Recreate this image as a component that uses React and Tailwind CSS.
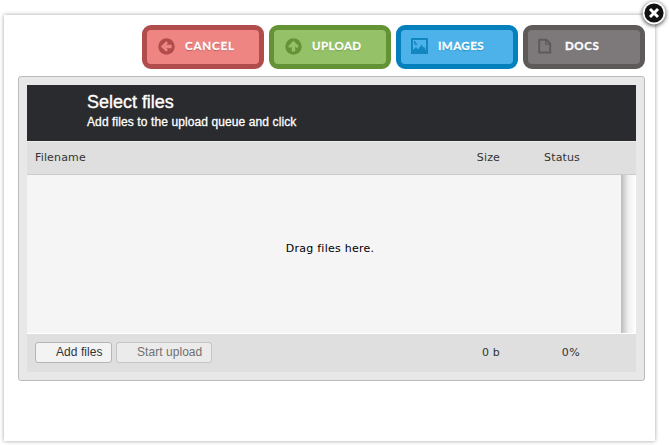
import React from 'react';

function ArrowIcon({ up, fill, arrow }) {
  return (
    <svg width="17" height="17" viewBox="0 0 17 17">
      <circle cx="8.5" cy="8.5" r="8.2" fill={fill} />
      <path
        d="M2.8 8.5L8.2 3.2L10 5L8.5 6.8H13.6V10.2H8.5L10 12L8.2 13.8Z"
        fill={arrow}
        transform={up ? 'rotate(90 8.5 8.5)' : undefined}
      />
    </svg>
  );
}

function ImageIcon() {
  return (
    <svg width="17" height="16" viewBox="0 0 17 16" className="-ml-px">
      <path fillRule="evenodd" d="M0 0H17V16H0ZM2 2V14H15V2Z" fill="#1286be" />
      <path d="M2 12L5 9L7 11.4L10.6 6.6L12 9.4L13 8.6L15 12.5V14H2Z" fill="#1286be" />
      <path d="M3 3H4.6L4.2 4.6L6.8 6.2L4.8 7.2L3 5.4Z" fill="#1286be" />
    </svg>
  );
}

function DocIcon() {
  return (
    <svg width="17" height="16" viewBox="0 0 17 16" className="-ml-px">
      <path d="M1.2 1.7H8.4L12.2 5.6V14.5H1.2Z" fill="none" stroke="#5f5a5a" strokeWidth="2" />
      <path d="M7.8 2V6.2H12" fill="none" stroke="#5f5a5a" strokeWidth="1.3" />
    </svg>
  );
}

function ActionButton({ label, icon, colors, text }) {
  return (
    <button className={`flex h-11 w-[122px] items-center rounded-[9px] border-[5px] pb-0.5 pl-[11px] ${colors}`}>
      <span className="w-[27px] shrink-0">{icon}</span>
      <span className={`whitespace-nowrap font-[Lato,'Open_Sans',sans-serif] text-[11.5px] leading-none font-bold text-white [-webkit-text-stroke:0.3px_white] ${text}`}>
        {label}
      </span>
    </button>
  );
}

export default function App() {
  return (
    <div className="relative h-[445px] w-[669px] overflow-hidden bg-white pt-[15px] pl-1 font-['DejaVu_Sans',sans-serif] text-[11px] text-[#333]">
      <div className="h-[426px] w-[651px] bg-white px-3.5 pt-2.5 shadow-[0_0_4px_rgba(0,0,0,0.38)]">
        <div className="-mr-1 flex justify-end gap-[5px]">
          <ActionButton label="CANCEL" colors="border-[#b04c4b] bg-[#ee8582]" text="tracking-[0.85px] [text-shadow:0_1px_1px_#b04c4b]" icon={<ArrowIcon fill="#b04c4b" arrow="#ee8582" />} />
          <ActionButton label="UPLOAD" colors="border-[#649335] bg-[#95c168]" text="tracking-[0.4px] [text-shadow:0_1px_1px_#649335]" icon={<ArrowIcon up fill="#649335" arrow="#95c168" />} />
          <ActionButton label="IMAGES" colors="border-[#0481bd] bg-[#4db2e9]" text="-ml-px tracking-[0.45px] [text-shadow:0_1px_1px_#0481bd]" icon={<ImageIcon />} />
          <ActionButton label="DOCS" colors="border-[#5f5a5a] bg-[#7d797a]" text="-ml-px tracking-[0.6px]" icon={<DocIcon />} />
        </div>

        <div className="mt-[7px] h-[305px] w-[627px] rounded-[3px] border border-[#bbb] bg-[#e8e8e8] p-2">
          <div className="h-14 bg-[#2a2b2e] pt-2 pl-[60px] font-['Liberation_Sans',sans-serif] text-white">
            <div className="text-[18px] leading-[19px] tracking-[-0.02px] [-webkit-text-stroke:0.35px_white]">Select files</div>
            <div className="mt-[3px] text-[12px] leading-[14px] tracking-[0.1px] [-webkit-text-stroke:0.3px_white]">Add files to the upload queue and click</div>
          </div>
          <div className="flex h-[34px] items-center border-t border-b border-t-[#eee] border-b-[#ccc] bg-[#dfdfdf] pr-14 pl-2 tracking-[0.15px]">
            <span className="flex-1">Filename</span>
            <span className="w-20 text-right">Size</span>
            <span className="w-20 text-right">Status</span>
          </div>
          <div className="flex h-[158px] bg-[#f5f5f5]">
            <div className="flex flex-1 items-center justify-center pb-2.5 pl-3 tracking-[0.25px] text-black">Drag files here.</div>
            <div className="w-[15px] bg-linear-to-r from-[#bcbcbc] via-[#f0f0f0] via-50% to-white" />
          </div>
          <div className="flex h-[39px] items-center border-t border-white bg-[#dfdfdf] pr-14 pl-2 tracking-[0.15px]">
            <div className="flex flex-1 gap-1 pb-0.5 font-['Liberation_Sans',sans-serif] text-[12px]">
              <button className="h-[21px] w-[77px] rounded-[3px] border border-[#b5b5b5] bg-[#f3f3f3] pl-5 text-left leading-[18px] tracking-[0.05px] whitespace-nowrap">Add files</button>
              <button className="h-[21px] w-24 rounded-[3px] border border-[#c5c5c5] bg-[#ebebeb] pl-5 text-left leading-[18px] tracking-[0.05px] whitespace-nowrap text-[#707070]">Start upload</button>
            </div>
            <span className="w-20 text-right">0 b</span>
            <span className="w-20 text-right tracking-[0.4px]">0%</span>
          </div>
        </div>
      </div>

      <button aria-label="Close" className="absolute top-0 left-[639px]">
        <svg width="30" height="30" viewBox="0 0 30 30" className="drop-shadow-[0_1px_2px_rgba(0,0,0,0.8)]">
          <circle cx="15" cy="13" r="11.4" fill="white" />
          <circle cx="15" cy="13" r="9.6" fill="#111" />
          <path d="M11 9L19 17M19 9L11 17" stroke="white" strokeWidth="2.9" />
        </svg>
      </button>
    </div>
  );
}
